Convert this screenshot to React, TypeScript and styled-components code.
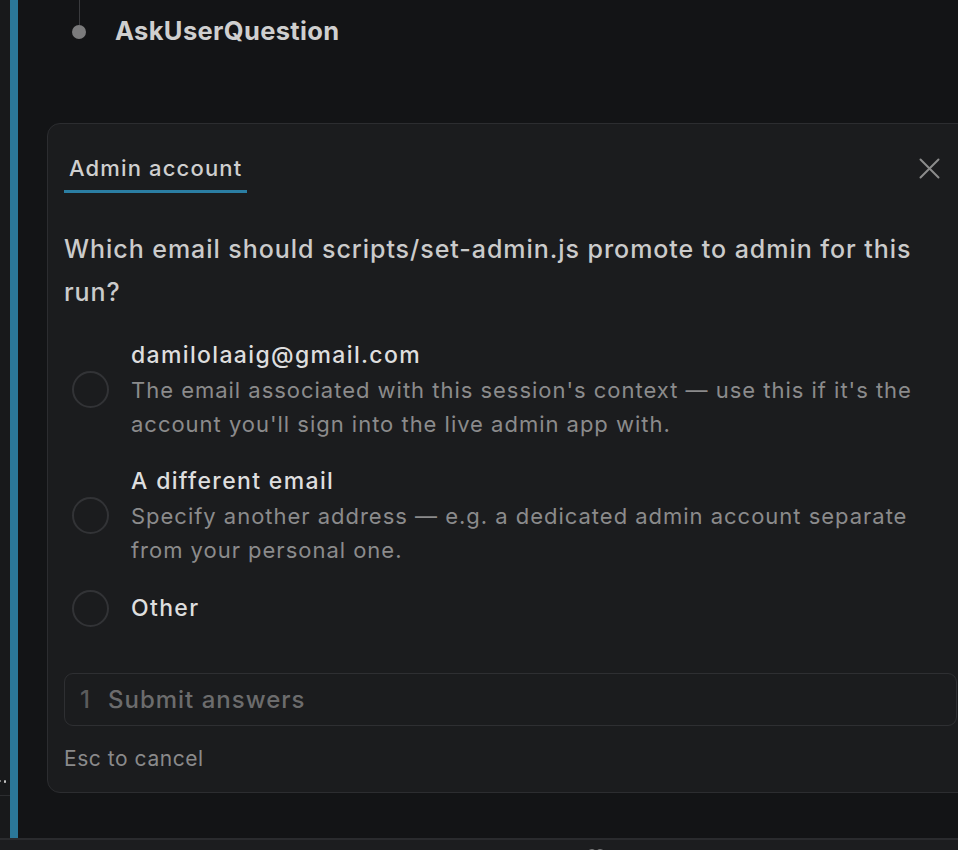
import React from "react";
import styled, { createGlobalStyle } from "styled-components";

const Global = createGlobalStyle`
  html, body { margin: 0; padding: 0; background: #131416; }
  body { font-family: Inter, "Noto Sans", "Liberation Sans", sans-serif; -webkit-font-smoothing: antialiased; }
  * { box-sizing: border-box; }
`;

const Frame = styled.div`
  width: 958px;
  height: 850px;
  overflow: hidden;
  display: grid;
  grid-template-rows: 838px 12px;
  background: #131416;
`;

const Workspace = styled.div`
  display: grid;
  grid-template-columns: 10px 8px 1fr;
  min-height: 0;
`;

const SideStrip = styled.div`
  background: #18191b;
  display: flex;
  flex-direction: column;
  justify-content: flex-end;
  padding-bottom: 42px;
`;

const StripDots = styled.div`
  height: 4px;
  display: flex;
  gap: 3px;
  align-items: center;
  justify-content: flex-end;
  padding-right: 4px;
  margin-bottom: 12px;
  span { width: 2px; height: 2px; border-radius: 50%; background: #9a9a9a; }
  span:last-child { width: 3px; height: 3px; background: #d0d0d0; }
`;

const StripRule = styled.div`
  height: 1px;
  background: #2c2d30;
`;

const AccentBar = styled.div`
  background: #2b7798;
`;

const Main = styled.div`
  min-width: 0;
  display: flex;
  flex-direction: column;
`;

const TimelineRow = styled.div`
  display: flex;
  align-items: flex-start;
  gap: 29px;
  padding-left: 54px;
`;

const Rail = styled.div`
  width: 14px;
  display: flex;
  flex-direction: column;
  align-items: center;
`;

const RailLine = styled.div`
  width: 1px;
  height: 25px;
  background: #3a3b3e;
`;

const RailDot = styled.div`
  width: 14px;
  height: 14px;
  border-radius: 50%;
  background: #7b7b7c;
`;

const ToolName = styled.div`
  margin-top: 17px;
  font-size: 25.5px;
  line-height: 28px;
  font-weight: 700;
  letter-spacing: 0.35px;
  color: #cfcfcf;
`;

const Card = styled.div`
  margin: 78px -16px 0 29px;
  border: 1px solid #2c2d30;
  border-radius: 13px;
  background: #1b1c1e;
  padding: 29px 16px 18px 16px;
`;

const Header = styled.div`
  display: flex;
  align-items: flex-start;
  justify-content: space-between;
`;

const Tab = styled.div`
  padding: 0 5px 7px 5px;
  border-bottom: 3px solid #2b7ea3;
  font-size: 22px;
  line-height: 30px;
  font-weight: 500;
  letter-spacing: 1.15px;
  color: #cfcfcf;
`;

const CloseButton = styled.button`
  margin: 5px 17px 0 0;
  width: 21px;
  height: 21px;
  padding: 0;
  border: none;
  background: transparent;
  display: flex;
  svg { display: block; }
`;

const Question = styled.div`
  margin-top: 35px;
  font-size: 25px;
  line-height: 43px;
  font-weight: 500;
  letter-spacing: 0.95px;
  color: #cbcbcb;
  padding-right: 20px;
`;

const OptionList = styled.div`
  margin-top: 24px;
  display: flex;
  flex-direction: column;
  gap: 23px;
`;

const OptionRow = styled.div`
  display: flex;
  align-items: center;
  gap: 22px;
  padding-left: 8px;
`;

const Radio = styled.div`
  flex: none;
  width: 37px;
  height: 37px;
  border-radius: 50%;
  border: 2px solid #323336;
`;

const OptionText = styled.div`
  display: flex;
  flex-direction: column;
  white-space: nowrap;
`;

const OptionTitle = styled.div`
  font-size: 23px;
  line-height: 35px;
  font-weight: 500;
  letter-spacing: 1.35px;
  color: #dedede;
`;

const OptionDesc = styled.div`
  font-size: 22px;
  line-height: 34px;
  font-weight: 400;
  letter-spacing: 0.98px;
  color: #8b8b8c;
`;

const SubmitBox = styled.div`
  margin-top: 46px;
  height: 53px;
  border: 1px solid #2e2f32;
  border-radius: 9px;
  display: flex;
  align-items: center;
  gap: 17px;
  padding-left: 15px;
  font-size: 24px;
  font-weight: 500;
  letter-spacing: 1px;
  color: #6c6c6d;
`;

const StepNum = styled.span`
  color: #5b5b5c;
`;

const Hint = styled.div`
  margin-top: 18px;
  font-size: 21px;
  line-height: 30px;
  letter-spacing: 0.55px;
  color: #8a8a8b;
`;

const StatusBar = styled.div`
  border-top: 2px solid #2a2b2e;
  background: #1c1d1f;
  display: flex;
  padding-left: 584px;
  padding-top: 6px;
`;

const options = [
  {
    title: "damilolaaig@gmail.com",
    desc: [
      "The email associated with this session's context — use this if it's the",
      "account you'll sign into the live admin app with.",
    ],
  },
  {
    title: "A different email",
    desc: [
      "Specify another address — e.g. a dedicated admin account separate",
      "from your personal one.",
    ],
  },
  { title: "Other", desc: [] as string[] },
];

export default function App() {
  return (
    <>
      <Global />
      <Frame>
        <Workspace>
          <SideStrip>
            <StripDots>
              <span />
              <span />
            </StripDots>
            <StripRule />
          </SideStrip>
          <AccentBar />
          <Main>
            <TimelineRow>
              <Rail>
                <RailLine />
                <RailDot />
              </Rail>
              <ToolName>AskUserQuestion</ToolName>
            </TimelineRow>
            <Card>
              <Header>
                <Tab>Admin account</Tab>
                <CloseButton aria-label="Close">
                  <svg width="21" height="21" viewBox="0 0 21 21">
                    <path d="M1.5 1.5 L19.5 19.5 M19.5 1.5 L1.5 19.5" stroke="#8c8c8c" strokeWidth="2" strokeLinecap="round" />
                  </svg>
                </CloseButton>
              </Header>
              <Question>
                Which email should scripts/set-admin.js promote to admin for this run?
              </Question>
              <OptionList>
                {options.map((o) => (
                  <OptionRow key={o.title}>
                    <Radio />
                    <OptionText>
                      <OptionTitle>{o.title}</OptionTitle>
                      {o.desc.map((d) => (
                        <OptionDesc key={d}>{d}</OptionDesc>
                      ))}
                    </OptionText>
                  </OptionRow>
                ))}
              </OptionList>
              <SubmitBox>
                <StepNum>1</StepNum>
                <span>Submit answers</span>
              </SubmitBox>
              <Hint>Esc to cancel</Hint>
            </Card>
          </Main>
        </Workspace>
        <StatusBar>
          <svg width="24" height="10" viewBox="0 0 24 10">
            <path d="M1 10 C1 3 11 1 12 6 C13 1 23 3 23 10 Z" fill="#9a9a9a" />
          </svg>
        </StatusBar>
      </Frame>
    </>
  );
}
